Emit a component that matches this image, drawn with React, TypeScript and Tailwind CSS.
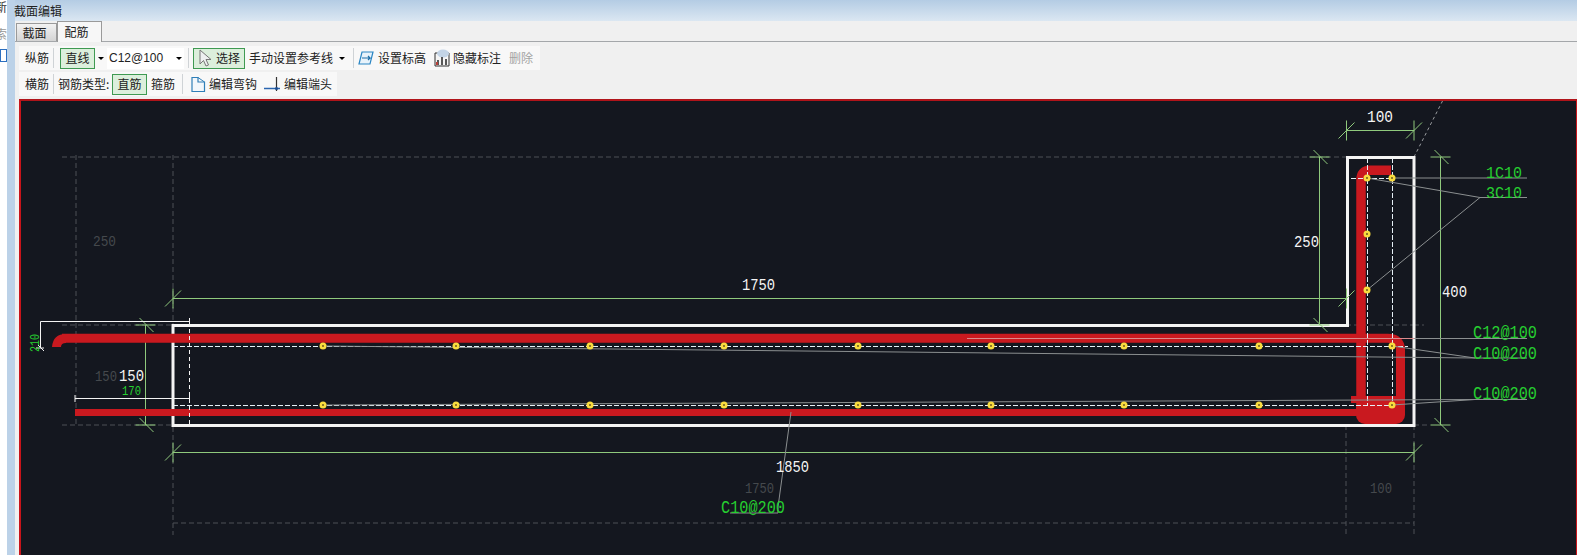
import React from "react";

const FONT = "font-['Noto_Sans_CJK_SC','Liberation_Sans',sans-serif]";
const GREEN = "#8fc97c";
const LABEL = "#26cf30";
const LEADER = "#8b8f90";
const AXIS = "#4d5156";
const BAR = "#f9dc3e";

const topBars = [323, 456, 590, 724, 858, 991, 1124, 1259, 1392];
const columnBars: [number, number][] = [
  [1367, 178],
  [1392, 178],
  [1367, 234],
  [1367, 290],
];

const Sep = () => <div className="mx-[4px] h-[20px] w-px bg-[#cfd3d6]" />;
const Caret = () => (
  <div className="h-0 w-0 border-x-[3px] border-t-[3px] border-x-transparent border-t-black" />
);

const Pressed: React.FC<{ children: React.ReactNode; className?: string }> = (props) => (
  <div
    className={
      "flex h-[21px] items-center justify-center gap-[4px] border border-[#3f9a52] bg-[#dcefdc] text-[#222] " +
      (props.className || "")
    }
  >
    {props.children}
  </div>
);

const Dim: React.FC<{ x1: number; y1: number; x2: number; y2: number }> = ({ x1, y1, x2, y2 }) => {
  const horizontal = y1 === y2;
  const tick = (x: number, y: number, key: string) => (
    <g key={key}>
      <line x1={x - 8} y1={y + 8} x2={x + 8} y2={y - 8} />
      <line x1={x} y1={y - 10} x2={x} y2={y + 10} />
    </g>
  );
  return (
    <g stroke={GREEN} strokeWidth={1}>
      <line x1={x1} y1={y1} x2={x2} y2={y2} />
      {horizontal ? (
        <>
          {tick(x1, y1, "a")}
          {tick(x2, y2, "b")}
        </>
      ) : (
        <>
          <line x1={x1 - 10} y1={y1} x2={x1 + 10} y2={y1} />
          <line x1={x1 - 6} y1={y1 - 7} x2={x1 + 8} y2={y1 + 7} />
          <line x1={x2 - 10} y1={y2} x2={x2 + 10} y2={y2} />
          <line x1={x2 - 6} y1={y2 - 7} x2={x2 + 8} y2={y2 + 7} />
        </>
      )}
    </g>
  );
};

const CadText: React.FC<{
  x: number;
  y: number;
  w: number;
  fill?: string;
  size?: number;
  children: string;
}> = ({ x, y, w, fill = "#f4f4f4", size = 16, children }) => (
  <text
    x={x}
    y={y}
    fontSize={size}
    fill={fill}
    textLength={w}
    lengthAdjust="spacingAndGlyphs"
    fontFamily="'Liberation Mono', monospace"
  >
    {children}
  </text>
);

const Drawing = () => (
  <svg viewBox="21 101 1555 454" className="block h-full w-full">
    {/* grid axes */}
    <g stroke={AXIS} strokeWidth={1} strokeDasharray="5 3" fill="none">
      <line x1={62} y1={157} x2={1346} y2={157} />
      <line x1={62} y1={325} x2={172} y2={325} />
      <line x1={62} y1={425} x2={172} y2={425} />
      <line x1={1414} y1={325} x2={1424} y2={325} />
      <line x1={1414} y1={425} x2={1430} y2={425} />
      <line x1={76} y1={155} x2={76} y2={425} />
      <line x1={173} y1={155} x2={173} y2={535} />
      <line x1={1346} y1={425} x2={1346} y2={535} />
      <line x1={1414} y1={425} x2={1414} y2={535} />
      <line x1={173} y1={523} x2={1414} y2={523} />
      <line x1={1346} y1={325} x2={1414} y2={325} />
      <line x1={1414} y1={157} x2={1443} y2={100} stroke="#9a9da0" strokeDasharray="3 3" />
    </g>

    {/* concrete outline */}
    <path
      d="M173 325.5H1347.5V157.5H1414V425.5H173Z"
      fill="none"
      stroke="#f4f4f4"
      strokeWidth={3}
    />

    {/* dimensions */}
    <Dim x1={1346.5} y1={130.5} x2={1414} y2={130.5} />
    <Dim x1={173} y1={298.5} x2={1346.5} y2={298.5} />
    <Dim x1={173} y1={452.5} x2={1414} y2={452.5} />
    <Dim x1={1319.5} y1={157} x2={1319.5} y2={325} />
    <Dim x1={1440.5} y1={157} x2={1440.5} y2={425} />
    <Dim x1={145.5} y1={325} x2={145.5} y2={425} />

    {/* rebar */}
    <g fill="none" stroke="#c9191f" strokeLinecap="butt">
      <path d="M1391 170.3H1370Q1361 170.3 1361 180V410" strokeWidth={9.5} />
      <path d="M62 338.3H1388Q1400.5 338.3 1400.5 350V410" strokeWidth={9} />
      <path d="M75 412.5H1365" strokeWidth={7} />
      <path d="M1351 399.5H1400" strokeWidth={7} />
    </g>
    <rect x={1356} y={400} width={49} height={24} rx={9} fill="#c9191f" />
    <path d="M52 347Q53 334 66 334V343Q61 343 61 347Z" fill="#c9191f" />

    {/* reference lines for bars */}
    <g stroke="#e6f0f6" strokeWidth={1} strokeDasharray="5 2" fill="none">
      <line x1={173} y1={346.5} x2={1408} y2={346.5} />
      <line x1={173} y1={405.5} x2={1392} y2={405.5} />
      <line x1={1367.5} y1={158} x2={1367.5} y2={405} />
      <line x1={1392.5} y1={158} x2={1392.5} y2={405} />
      <line x1={1351} y1={178.5} x2={1392} y2={178.5} />
    </g>
    <g stroke="#f4f4f4" strokeWidth={1} fill="none">
      <path d="M40.5 348V321.5H189.5" />
      <path d="M75 398.5H189.5" />
      <path d="M75 395V402M189.5 395V402M189.5 318V325M36 348H44M38 345L44 351" />
      <line x1={189.5} y1={322} x2={189.5} y2={425} strokeDasharray="4 3" />
    </g>

    {/* leaders */}
    <g stroke={LEADER} strokeWidth={1} fill="none">
      <path d="M1392 178H1527M1367 178L1480 197.5H1527M1367 290L1480 197.5" />
      <path d="M967 338.5H1527" stroke="#d98a8c" />
      <path d="M1414 338.5H1527" />
      <path d="M323 346L1475 358H1527M1392 346L1475 358" />
      <path d="M323 405L1475 399.5H1527M1392 405L1475 399.5" />
      <path d="M791 412L778 507V513H730" />
    </g>

    {/* bars */}
    {topBars.map((x) => (
      <g key={x}>
        <circle cx={x} cy={346} r={3.5} fill={BAR} />
        <circle cx={x} cy={346} r={1} fill="#6b5a20" />
        <circle cx={x} cy={405} r={3.5} fill={BAR} />
        <circle cx={x} cy={405} r={1} fill="#6b5a20" />
      </g>
    ))}
    {columnBars.map(([x, y]) => (
      <g key={y + "-" + x}>
        <circle cx={x} cy={y} r={3.5} fill={BAR} />
        <circle cx={x} cy={y} r={1} fill="#6b5a20" />
      </g>
    ))}

    {/* dimension text */}
    <CadText x={1367} y={122} w={26}>100</CadText>
    <CadText x={1294} y={247} w={25}>250</CadText>
    <CadText x={1442} y={297} w={25}>400</CadText>
    <CadText x={742} y={290} w={33}>1750</CadText>
    <CadText x={776} y={472} w={33}>1850</CadText>
    <CadText x={119} y={381} w={25}>150</CadText>
    <CadText x={122} y={395} w={19} size={13} fill={LABEL}>170</CadText>
    <text
      transform="translate(39 352)  rotate(-90)"
      fontSize={13}
      fill={LABEL}
      textLength={18}
      lengthAdjust="spacingAndGlyphs"
      fontFamily="'Liberation Mono', monospace"
    >
      210
    </text>

    {/* faded dimensions of the original section */}
    <CadText x={93} y={246} w={23} size={14} fill="#45494d">250</CadText>
    <CadText x={95} y={381} w={22} size={14} fill="#45494d">150</CadText>
    <CadText x={745} y={493} w={29} size={14} fill="#45494d">1750</CadText>
    <CadText x={1370} y={493} w={22} size={14} fill="#45494d">100</CadText>

    {/* bar labels */}
    <CadText x={1486} y={178} w={36} size={17} fill={LABEL}>1C10</CadText>
    <CadText x={1486} y={198} w={36} size={17} fill={LABEL}>3C10</CadText>
    <CadText x={1473} y={338} w={64} size={18} fill={LABEL}>C12@100</CadText>
    <CadText x={1473} y={359} w={64} size={18} fill={LABEL}>C10@200</CadText>
    <CadText x={1473} y={399} w={64} size={18} fill={LABEL}>C10@200</CadText>
    <CadText x={721} y={513} w={64} size={18} fill={LABEL}>C10@200</CadText>
  </svg>
);

const CursorIcon = () => (
  <svg width="14" height="18" viewBox="0 0 14 18">
    <path d="M2 1V15L5.5 11.5L8 17L10.5 16L8 10.5H13Z" fill="#eef0f0" stroke="#777" strokeWidth="1" />
  </svg>
);

const LevelIcon = () => (
  <svg width="16" height="16" viewBox="0 0 16 16">
    <path d="M4 2H15L12 14H1Z" fill="#e8f3fb" stroke="#2a86c4" strokeWidth="1.2" />
    <path d="M4 8H12L10 6M12 8L10 10" fill="none" stroke="#1d6fa8" strokeWidth="1.2" />
  </svg>
);

const HideIcon = () => (
  <svg width="16" height="18" viewBox="0 0 16 18">
    <path d="M1 4H15V17H1Z" fill="#f5f5f5" stroke="#333" strokeWidth="1" />
    <ellipse cx="9" cy="4.5" rx="6" ry="4" fill="#c3d4e6" />
    <path d="M4 16V11M8 16V8M12 16V10" stroke="#333" strokeWidth="1.6" />
    <rect x="2" y="13" width="2" height="3" fill="#b8403a" />
  </svg>
);

const HookIcon = () => (
  <svg width="16" height="17" viewBox="0 0 16 17">
    <path d="M2 1.5H8V6H14.5V15.5H2Z" fill="#f2f7fb" stroke="#2f7fb8" strokeWidth="1.2" />
    <path d="M8 1.5L14.5 6" stroke="#2f7fb8" strokeWidth="1" />
  </svg>
);

const EndIcon = () => (
  <svg width="17" height="17" viewBox="0 0 17 17">
    <path d="M0 12.5H16" stroke="#2b66b0" strokeWidth="1.5" />
    <path d="M12.5 1V15" stroke="#333" strokeWidth="1.2" />
    <circle cx="12.5" cy="12.5" r="1.6" fill="#1f4f92" />
  </svg>
);

const App: React.FC = () => {
  return (
    <div className={"flex h-[555px] w-[1577px] overflow-hidden bg-[#f0f0f0] text-[12px] leading-none text-[#222] " + FONT}>
      <div className="flex w-[15px] shrink-0 bg-white">
        <div className="flex w-[7px] flex-col items-start overflow-hidden text-[12px] text-[#333]">
          <span className="-ml-[5px] mt-[1px]">新</span>
          <span className="-ml-[5px] mt-[15px] text-[#999]">索</span>
          <div className="mt-[9px] h-[13px] w-[7px] border border-[#2b6fc0]" />
        </div>
        <div className="w-[8px] bg-[#bcd2e8]" />
      </div>

      <div className="flex min-w-0 flex-1 flex-col">
        <div className="flex h-[21px] items-center bg-gradient-to-b from-[#b4cce4] to-[#dbe7f2] text-[12px]">
          <span className="-ml-px">截面编辑</span>
        </div>

        <div className="flex h-[21px] items-end border-b border-[#a4a7aa] pl-[1px]">
          <div className="flex h-[18px] w-[41px] items-center justify-center border border-b-0 border-[#9a9a9a] bg-gradient-to-b from-[#f2f2f2] to-[#d4d4d4] pr-[4px]">
            截面
          </div>
          <div className="-mb-px flex h-[21px] w-[45px] items-center justify-center border border-b-0 border-[#9a9a9a] bg-[#f7f7f7] pr-[6px]">
            配筋
          </div>
        </div>

        <div className="flex h-[57px] flex-col items-start gap-[2px] pl-[4px] pt-[4px]">
          <div className="flex h-[24px] w-[521px] items-center bg-[#f8f8f8] pl-[6px]">
            <span className="w-[24px]">纵筋</span>
            <Sep />
            <Pressed className="ml-[2px] w-[35px]">直线</Pressed>
            <div className="ml-[3px]"><Caret /></div>
            <div className="ml-[3px] flex h-[21px] w-[77px] items-center justify-between bg-white pl-[2px] pr-[2px] font-['Liberation_Sans',sans-serif]">
              <span>C12@100</span>
              <Caret />
            </div>
            <Sep />
            <Pressed className="w-[52px]">
              <CursorIcon />
              选择
            </Pressed>
            <span className="ml-[4px] w-[85px]">手动设置参考线</span>
            <div className="ml-[5px]"><Caret /></div>
            <div className="ml-[4px]"><Sep /></div>
            <LevelIcon />
            <span className="ml-[4px] w-[48px]">设置标高</span>
            <div className="ml-[8px]"><HideIcon /></div>
            <span className="ml-[3px] w-[48px]">隐藏标注</span>
            <span className="ml-[8px] text-[#a3a3a3]">删除</span>
          </div>
          <div className="flex h-[24px] w-[318px] items-center bg-[#f8f8f8] pl-[6px]">
            <span className="w-[24px]">横筋</span>
            <Sep />
            <span className="w-[54px] whitespace-nowrap">钢筋类型:</span>
            <Pressed className="w-[35px]">直筋</Pressed>
            <span className="ml-[4px] w-[24px]">箍筋</span>
            <div className="ml-[3px]"><Sep /></div>
            <div className="ml-[3px]"><HookIcon /></div>
            <span className="ml-[3px] w-[48px]">编辑弯钩</span>
            <div className="ml-[7px]"><EndIcon /></div>
            <span className="ml-[3px]">编辑端头</span>
          </div>
        </div>

        <div className="min-h-0 flex-1 pl-[4px]">
          <div className="h-full border-l-2 border-t-2 border-r border-[#c8141a] border-t-[#b0141a] bg-[#14171f]">
            <Drawing />
          </div>
        </div>
      </div>
    </div>
  );
};

export default App;
